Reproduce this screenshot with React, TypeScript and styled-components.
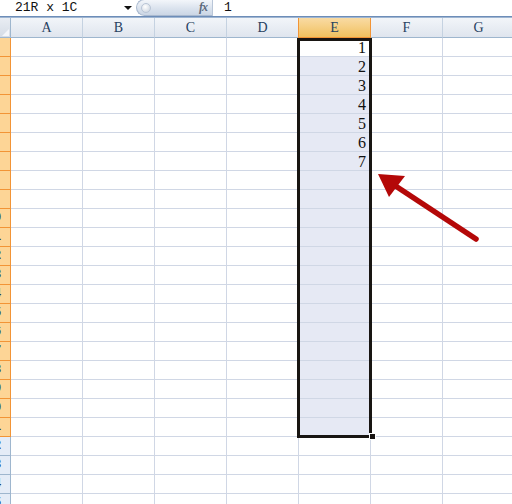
import React from 'react'
import styled, { createGlobalStyle } from 'styled-components'

const GlobalStyle = createGlobalStyle`
  html, body {
    margin: 0;
    padding: 0;
    background: #ffffff;
    overflow: hidden;
  }
  #root {
    width: 512px;
    height: 504px;
    overflow: hidden;
  }
`

const COLS = ['A', 'B', 'C', 'D', 'E', 'F', 'G']
const ROW_COUNT = 25
const SELECTED_COL = 'E'
const SELECTED_ROWS = 21
const values: Record<number, string> = { 1: '1', 2: '2', 3: '3', 4: '4', 5: '5', 6: '6', 7: '7' }

const Sheet = styled.div`
  width: 512px;
  height: 504px;
  display: flex;
  flex-direction: column;
  overflow: hidden;
  position: relative;
`

const FormulaBar = styled.div`
  height: 16px;
  display: flex;
  align-items: stretch;
  background: #ffffff;
  font-family: 'Liberation Mono', 'DejaVu Sans Mono', monospace;
  font-size: 13px;
  color: #111;
`

const NameBox = styled.div`
  width: 120px;
  padding-left: 15px;
  box-sizing: border-box;
  display: flex;
  align-items: center;
  white-space: pre;
  line-height: 16px;
`

const DropArrow = styled.div`
  width: 16px;
  display: flex;
  align-items: center;
  justify-content: flex-start;
  padding-left: 4px;
  box-sizing: border-box;
  &::before {
    content: '';
    border-left: 4px solid transparent;
    border-right: 4px solid transparent;
    border-top: 4px solid #111;
  }
`

const Pill = styled.div`
  width: 76px;
  margin-top: -1px;
  height: 17px;
  border-radius: 9px 0 0 9px;
  border: 1px solid #a9b9cf;
  border-right: none;
  box-sizing: border-box;
  background: linear-gradient(#f3f6fa, #dbe3ee 55%, #cbd6e5);
  display: flex;
  align-items: center;
  justify-content: space-between;
  padding: 0 5px 0 4px;
`

const Knob = styled.div`
  width: 8px;
  height: 8px;
  border-radius: 50%;
  background: radial-gradient(circle at 40% 35%, #ffffff, #c5cfdc);
  border: 1px solid #b9c5d6;
`

const Fx = styled.span`
  font-family: 'Liberation Serif', serif;
  font-style: italic;
  font-weight: bold;
  font-size: 12px;
  color: #5d6a7c;
  letter-spacing: -1px;
`

const FormulaInput = styled.div`
  flex: 1;
  border-left: 1px solid #b9c6d8;
  padding-left: 11px;
  line-height: 16px;
`

const BarDivider = styled.div`
  height: 3px;
  border-top: 1px solid #6d8db8;
  border-bottom: 1px solid #9fb6d2;
  background: #e9eff7;
  box-sizing: border-box;
`

const Grid = styled.div`
  position: relative;
  display: grid;
  grid-template-columns: 11px repeat(7, 72px);
  grid-auto-rows: 19px;
  grid-template-rows: 20px;
  font-family: 'Liberation Serif', 'DejaVu Serif', serif;
`

const Corner = styled.div`
  background: linear-gradient(#e9edf3, #d5dce6);
  border-right: 1px solid #9eb6ce;
  border-bottom: 1px solid #9eb6ce;
  box-sizing: border-box;
  position: relative;
  &::after {
    content: '';
    position: absolute;
    right: 1px;
    bottom: 1px;
    border-left: 7px solid transparent;
    border-bottom: 7px solid #f4f6fa;
  }
`

const ColHeader = styled.div<{ $active?: boolean }>`
  box-sizing: border-box;
  display: flex;
  align-items: center;
  justify-content: center;
  font-size: 14px;
  color: #27415f;
  background: ${({ $active }) =>
    $active ? 'linear-gradient(#f9dba4, #f1c15f)' : 'linear-gradient(#f2f5f9, #dfe5ee)'};
  border-right: 1px solid ${({ $active }) => ($active ? '#f29436' : '#c5d2e1')};
  border-left: ${({ $active }) => ($active ? '1px solid #f29436' : 'none')};
  border-bottom: 1px solid ${({ $active }) => ($active ? '#f29436' : '#9eb6ce')};
  margin-left: ${({ $active }) => ($active ? '-1px' : '0')};
`

const RowHeader = styled.div<{ $active?: boolean }>`
  box-sizing: border-box;
  overflow: hidden;
  font-family: 'Liberation Mono', monospace;
  font-size: 12px;
  line-height: 19px;
  color: #1f3550;
  background: ${({ $active }) => ($active ? '#fdd596' : '#e4ecf7')};
  border-right: 1px solid ${({ $active }) => ($active ? '#f29436' : '#9eb6ce')};
  border-bottom: 1px solid ${({ $active }) => ($active ? '#f29436' : '#9eb6ce')};
`

const RowLabel = styled.span`
  display: block;
  width: 30px;
  margin-left: -21px;
  text-align: center;
  font-weight: bold;
`

const Cell = styled.div<{ $fill?: string }>`
  box-sizing: border-box;
  background: ${({ $fill }) => $fill || '#ffffff'};
  border-right: 1px solid #d0d7e5;
  border-bottom: 1px solid #d0d7e5;
  text-align: right;
  padding-right: 4px;
  font-size: 16px;
  line-height: 19px;
  color: #111;
`

const Selection = styled.div`
  position: absolute;
  left: 297px;
  top: 20px;
  width: 75px;
  height: 400px;
  border: 3px solid #181512;
  box-sizing: border-box;
  pointer-events: none;
`

const FillHandle = styled.div`
  position: absolute;
  left: 369px;
  top: 415px;
  width: 7px;
  height: 7px;
  background: #181512;
  border: 1px solid #ffffff;
  box-sizing: border-box;
`

const Arrow = styled.svg`
  position: absolute;
  left: 0;
  top: 0;
  pointer-events: none;
`

export default function App() {
  const rows = Array.from({ length: ROW_COUNT }, (_, i) => i + 1)
  return (
    <Sheet>
      <GlobalStyle />
      <FormulaBar>
        <NameBox>21R x 1C</NameBox>
        <DropArrow />
        <Pill>
          <Knob />
          <Fx>fx</Fx>
        </Pill>
        <FormulaInput>1</FormulaInput>
      </FormulaBar>
      <BarDivider />
      <Grid>
        <Corner />
        {COLS.map((c) => (
          <ColHeader key={c} $active={c === SELECTED_COL}>
            {c}
          </ColHeader>
        ))}
        {rows.map((r) => (
          <React.Fragment key={r}>
            <RowHeader $active={r <= SELECTED_ROWS}>
              <RowLabel>{r}</RowLabel>
            </RowHeader>
            {COLS.map((c) => {
              const inSel = c === SELECTED_COL && r <= SELECTED_ROWS
              const fill = inSel && r > 1 ? '#e6e9f4' : undefined
              return (
                <Cell key={c} $fill={fill}>
                  {c === SELECTED_COL ? values[r] : null}
                </Cell>
              )
            })}
          </React.Fragment>
        ))}
        <Selection />
        <FillHandle />
      </Grid>
      <Arrow width="512" height="504" viewBox="0 0 512 504">
        <line x1="476" y1="239" x2="388" y2="181" stroke="#b40808" strokeWidth="5.5" strokeLinecap="round" />
        <polygon points="378,174 405,176 389,197" fill="#b40808" />
      </Arrow>
    </Sheet>
  )
}
